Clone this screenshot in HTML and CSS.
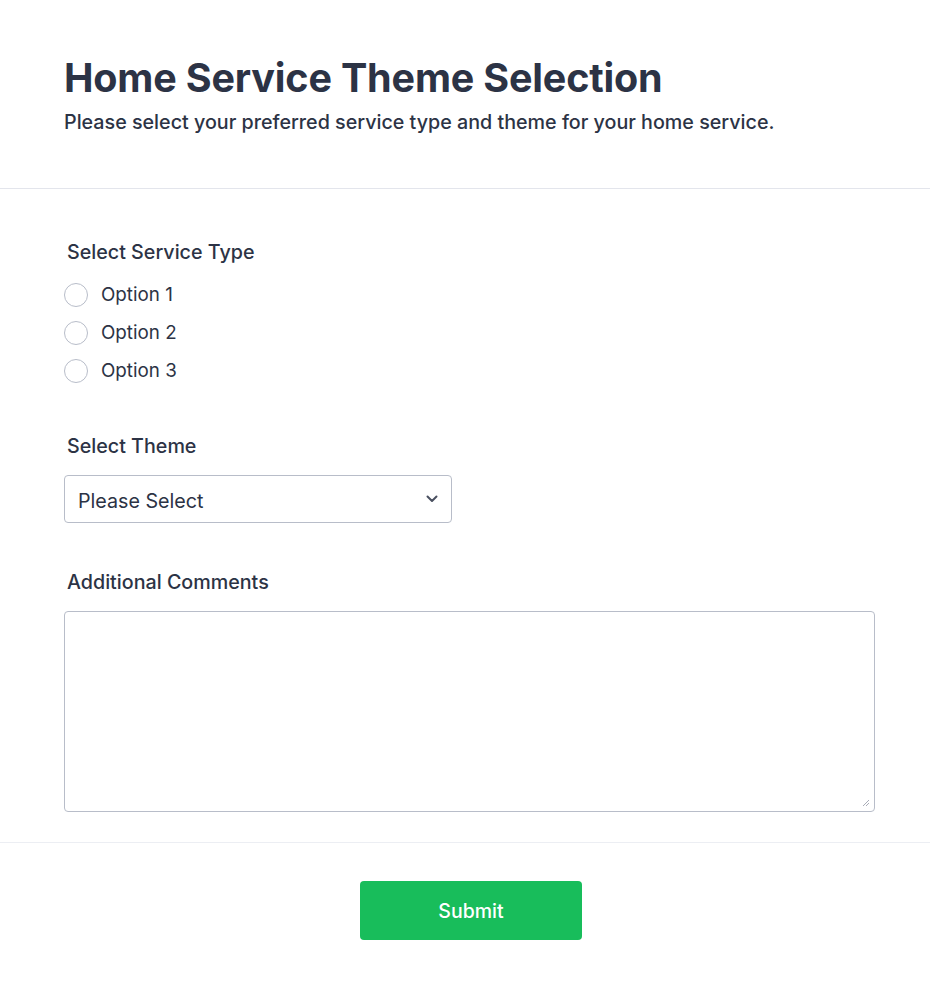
FILE: index.html
```html
<!DOCTYPE html>
<html lang="en">
<head>
<meta charset="utf-8">
<title>Home Service Theme Selection</title>
<link rel="stylesheet" href="styles.css">
</head>
<body>
<div class="page">
  <header class="header">
    <h1 class="title">Home Service Theme Selection</h1>
    <p class="subtitle">Please select your preferred service type and theme for your home service.</p>
  </header>
  <main class="body">
    <section class="field">
      <div class="label">Select Service Type</div>
      <div class="radios">
        <label class="radio"><span class="circle"></span><span class="opt">Option 1</span></label>
        <label class="radio"><span class="circle"></span><span class="opt">Option 2</span></label>
        <label class="radio"><span class="circle"></span><span class="opt">Option 3</span></label>
      </div>
    </section>
    <section class="field field-theme">
      <div class="label">Select Theme</div>
      <div class="select">
        <span class="select-text">Please Select</span>
        <svg class="chev" width="12" height="8" viewBox="0 0 12 8"><path d="M1.5 1.5 L6 6 L10.5 1.5" fill="none" stroke="#4a5060" stroke-width="2" stroke-linecap="round" stroke-linejoin="round"/></svg>
      </div>
    </section>
    <section class="field field-comments">
      <div class="label">Additional Comments</div>
      <div class="textarea">
        <svg class="grip" width="10" height="10" viewBox="0 0 10 10"><path d="M9 3 L3 9 M9 6 L6 9" stroke="#a9adb8" stroke-width="1" fill="none"/></svg>
      </div>
    </section>
  </main>
  <footer class="footer">
    <button class="submit" type="button">Submit</button>
  </footer>
</div>
</body>
</html>
```
FILE: styles.css
```css
* { box-sizing: border-box; }
html, body { margin: 0; padding: 0; background: #ffffff; }
body {
  font-family: Inter, "Noto Sans", "Liberation Sans", sans-serif;
  color: #2c3345;
}
.page { width: 930px; }
.header {
  padding: 52px 64px 0 64px;
  height: 189px;
  border-bottom: 1px solid #e3e5ec;
}
.title {
  margin: 0;
  font-size: 39.5px;
  line-height: 52px;
  font-weight: 700;
  letter-spacing: -0.18px;
}
.subtitle {
  margin: 4px 0 0 0;
  font-size: 19.7px;
  line-height: 28px;
  font-weight: 500;
}
.body {
  padding: 49px 55px 30px 64px;
  border-bottom: 1px solid #eceef3;
}
.field { display: flex; flex-direction: column; }
.label {
  padding-left: 3px;
  font-size: 19.7px;
  line-height: 28px;
  font-weight: 500;
}
.radios { display: flex; flex-direction: column; gap: 14px; margin-top: 17px; }
.radio { display: flex; align-items: center; gap: 13px; height: 24px; }
.circle {
  width: 24px; height: 24px;
  border: 1px solid #b8bdc9;
  border-radius: 50%;
  background: #fff;
}
.opt { font-size: 18.8px; line-height: 24px; color: #2c3345; }
.field-theme { margin-top: 49px; }
.select {
  margin-top: 15px;
  width: 388px;
  height: 48px;
  border: 1px solid #b8bdc9;
  border-radius: 4px;
  display: flex;
  align-items: center;
  justify-content: space-between;
  padding: 3px 13px 0 13px;
}
.chev { margin-top: -3px; }
.select-text { font-size: 19.7px; }
.field-comments { margin-top: 45px; }
.textarea {
  margin-top: 15px;
  width: 811px;
  height: 201px;
  border: 1px solid #b8bdc9;
  border-radius: 4px;
  display: flex;
  align-items: flex-end;
  justify-content: flex-end;
  padding: 0 4px 4px 0;
}
.footer {
  display: flex;
  justify-content: center;
  padding: 38px 0 49px 12px;
}
.submit {
  width: 222px;
  height: 59px;
  border: none;
  border-radius: 4px;
  background: #18bd5b;
  color: #ffffff;
  font-family: Inter, "Noto Sans", sans-serif;
  font-size: 19.5px;
  font-weight: 500;
}
```
